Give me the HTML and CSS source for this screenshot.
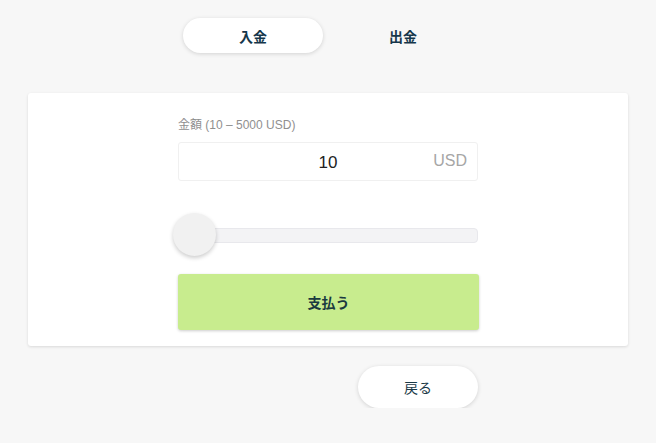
FILE: index.html
```html
<!DOCTYPE html>
<html lang="ja">
<head>
<meta charset="utf-8">
<link rel="stylesheet" href="styles.css">
</head>
<body>
<div class="tabs">
  <div class="tab active">入金</div>
  <div class="tab">出金</div>
</div>
<div class="card">
  <div class="col">
    <div class="label">金額 (10 – 5000 USD)</div>
    <div class="input">
      <span class="value">10</span>
      <span class="cur">USD</span>
    </div>
    <div class="slider">
      <div class="track"></div>
      <div class="thumb"></div>
    </div>
    <div class="pay">支払う</div>
  </div>
</div>
<div class="backrow">
  <div class="back">戻る</div>
</div>
</body>
</html>
```
FILE: styles.css
```css
html, body {
  margin: 0;
  padding: 0;
  background: #f7f7f7;
  font-family: "Liberation Sans", "Noto Sans CJK JP", sans-serif;
  color: #1b3a48;
}
.tabs {
  display: flex;
  justify-content: center;
  gap: 10px;
  padding-top: 18px;
}
.tab {
  width: 140px;
  height: 35px;
  border-radius: 18px;
  display: flex;
  align-items: center;
  justify-content: center;
  font-size: 14px;
  font-weight: bold;
  color: #15364a;
}
.tab.active {
  background: #fff;
  box-shadow: 0 1px 4px rgba(0,0,0,0.15);
}
.card {
  margin: 40px 28px 0;
  background: #fff;
  border-radius: 3px;
  box-shadow: 0 1px 3px rgba(0,0,0,0.12);
  padding: 24px 0 16px;
  display: flex;
  justify-content: center;
}
.col {
  width: 300px;
  display: flex;
  flex-direction: column;
}
.label {
  font-size: 12px;
  line-height: 16px;
  color: #8f8f8f;
  margin-bottom: 9px;
}
.input {
  height: 39px;
  box-sizing: border-box;
  border: 1px solid #f0f0f0;
  border-radius: 3px;
  display: flex;
  align-items: center;
  position: relative;
}
.value {
  flex: 1;
  text-align: center;
  font-size: 17px;
  color: #222;
  padding-top: 2px;
}
.cur {
  position: absolute;
  right: 10px;
  font-size: 16px;
  color: #a6a6a6;
  top: 9px;
}
.slider {
  margin-top: 32px;
  height: 44px;
  position: relative;
  display: flex;
  align-items: center;
}
.track {
  flex: 1;
  height: 15px;
  box-sizing: border-box;
  background: #f3f3f5;
  border: 1px solid #e8e8ec;
  border-radius: 4px;
}
.thumb {
  position: absolute;
  left: -5px;
  top: 0;
  width: 43px;
  height: 43px;
  border-radius: 50%;
  background: #f1f1f1;
  box-shadow: 0 2px 4px rgba(0,0,0,0.2);
}
.pay {
  margin-top: 17px;
  width: 301px;
  height: 56px;
  background: #c8ec8e;
  border-radius: 3px;
  box-shadow: 0 1px 3px rgba(0,0,0,0.2);
  display: flex;
  align-items: center;
  justify-content: center;
  font-size: 14px;
  font-weight: bold;
  color: #1b3a40;
}
.backrow {
  width: 300px;
  margin: 20px auto 0;
  display: flex;
  justify-content: flex-end;
}
.back {
  width: 120px;
  height: 42px;
  border-radius: 21px;
  background: #fff;
  box-shadow: 0 1px 4px rgba(0,0,0,0.15);
  display: flex;
  align-items: center;
  justify-content: center;
  font-size: 14px;
  color: #1b3a48;
}
```
